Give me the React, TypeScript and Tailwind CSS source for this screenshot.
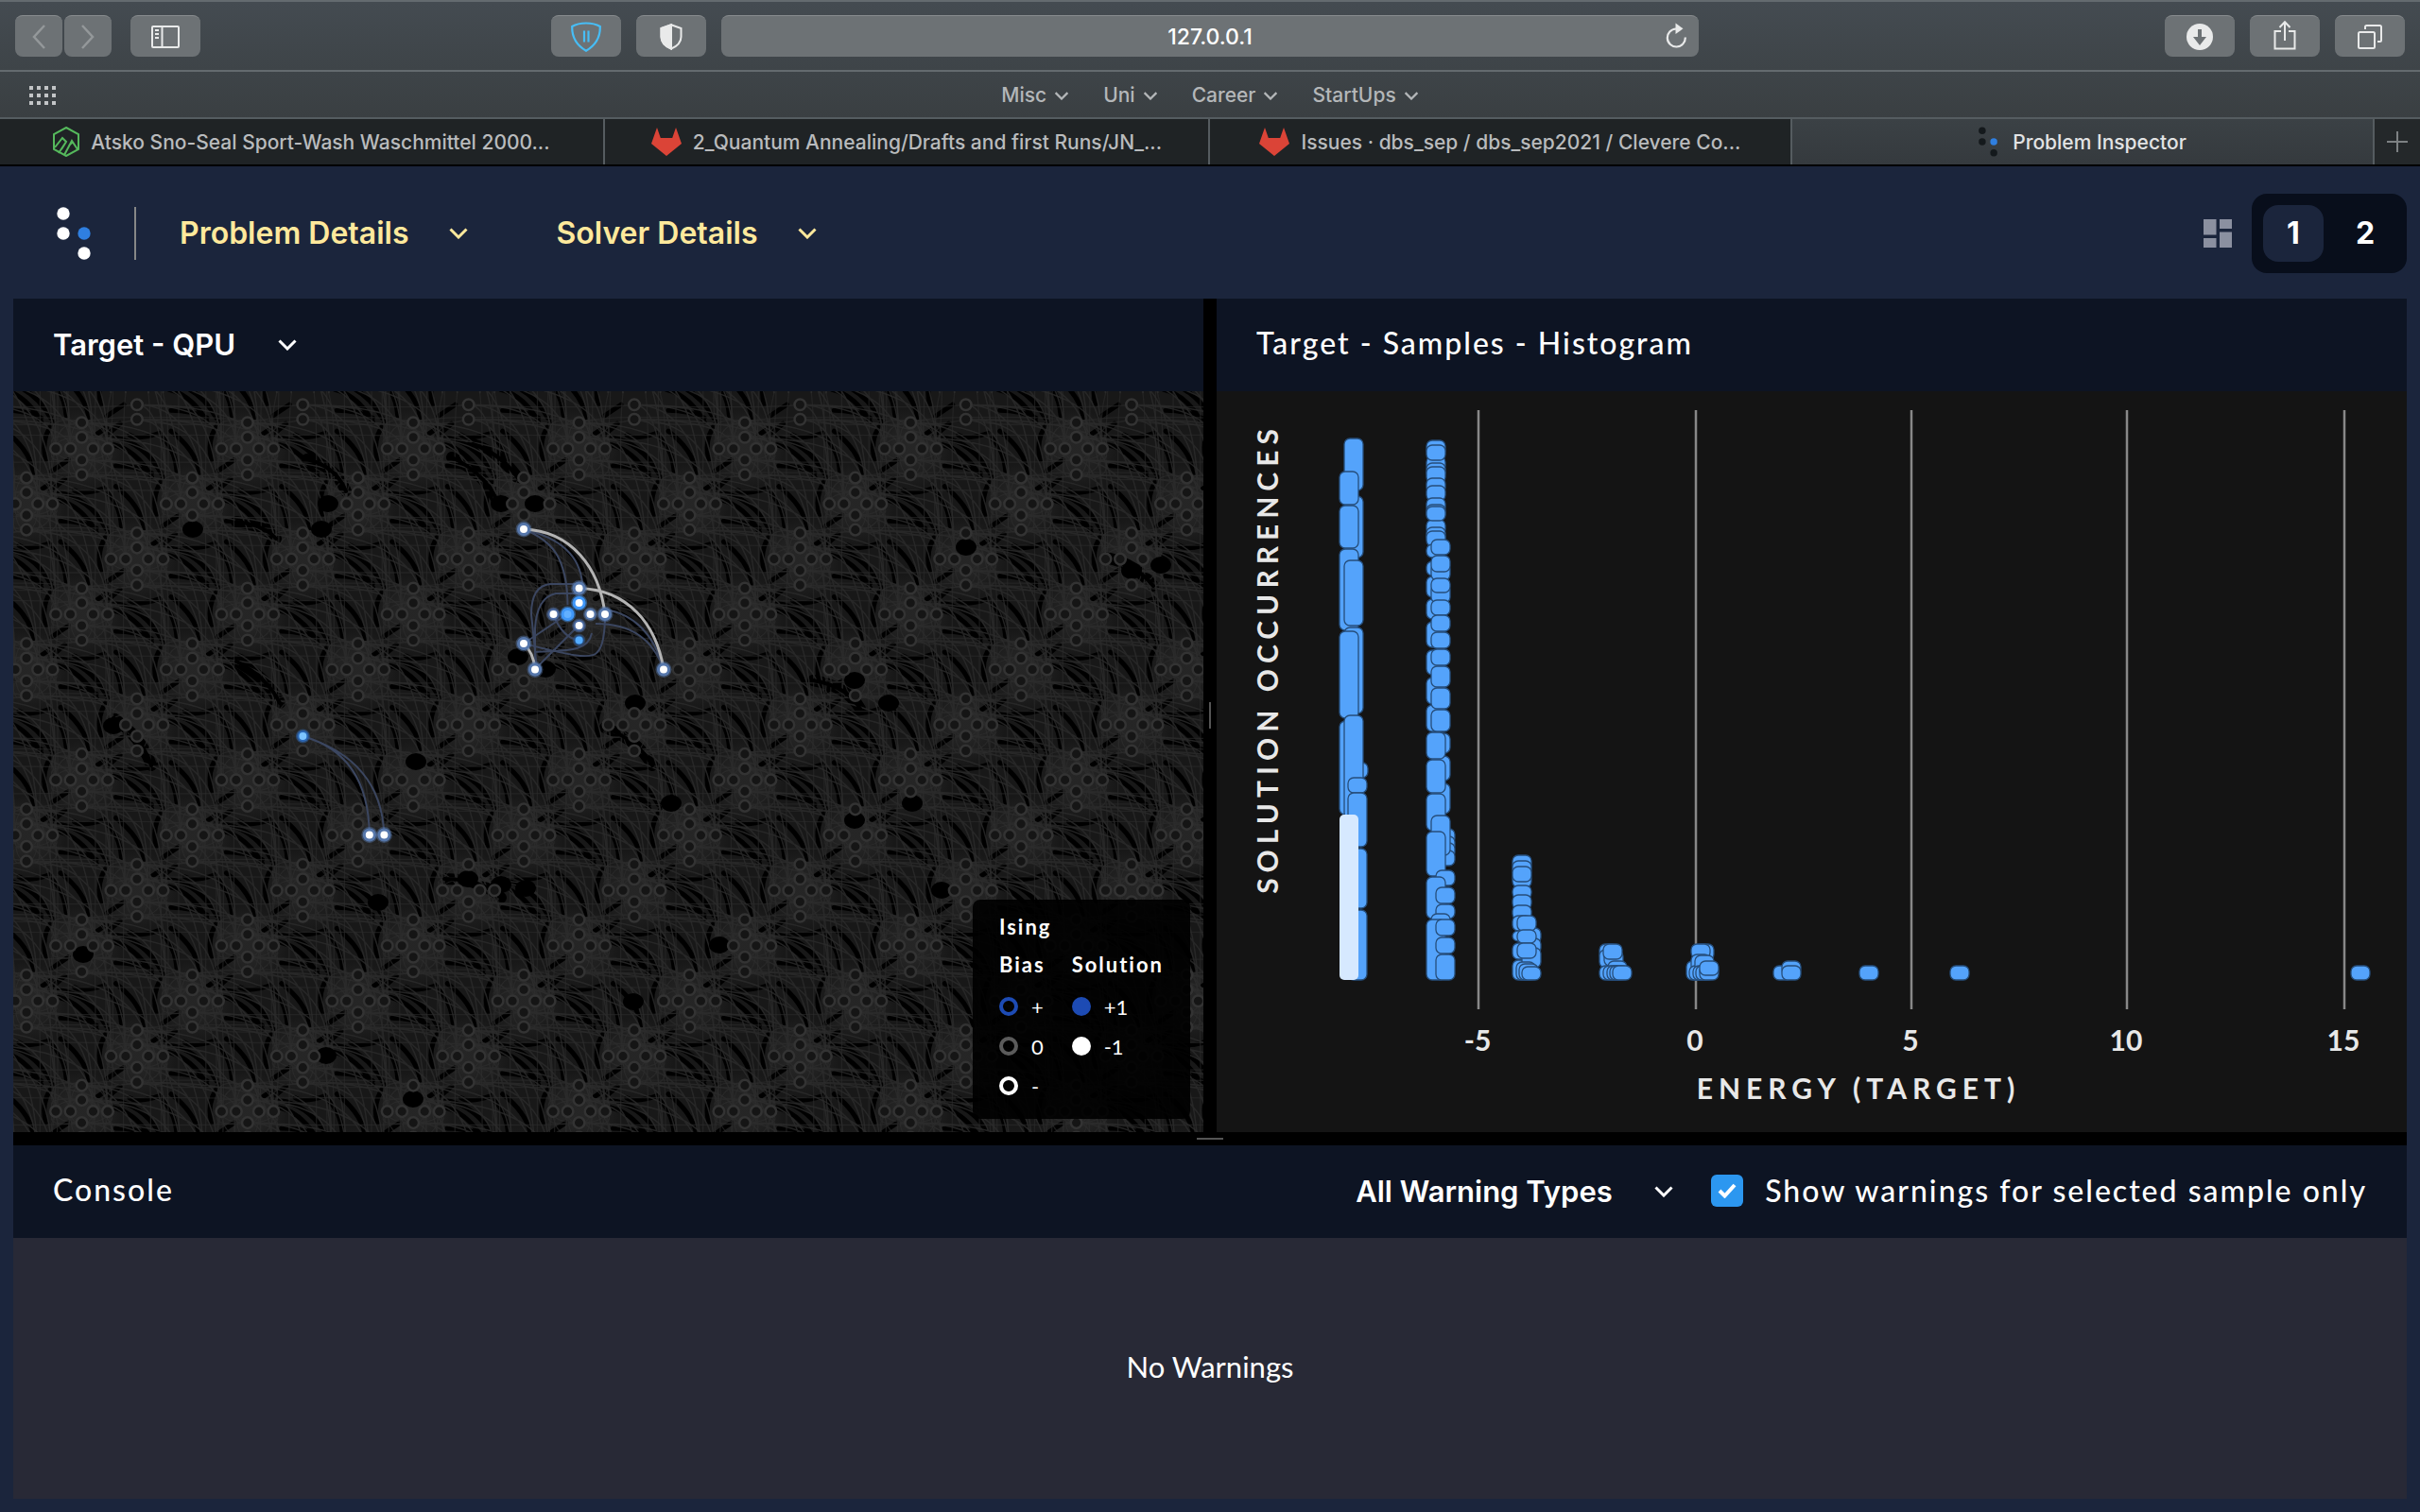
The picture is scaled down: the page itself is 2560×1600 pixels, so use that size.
import React from "react";

const UI = "font-['Inter',sans-serif]";
const BODY = "font-['Lato',sans-serif]";

function Chevron({ className }: { className: string }) {
  return (
    <svg viewBox="0 0 20 12" className={className} fill="none" stroke="currentColor" strokeWidth="3" aria-hidden="true">
      <path d="M1.5 1.5 10 10l8.5-8.5" />
    </svg>
  );
}

/* ---------- Browser chrome ---------- */

function ToolButton({ label, className, children }: { label: string; className: string; children: React.ReactNode }) {
  return (
    <button
      aria-label={label}
      className={`flex h-11 items-center justify-center rounded-lg border-t border-[#888c8e] bg-[#6d7275] text-[#e9eaea] ${className}`}
    >
      {children}
    </button>
  );
}

function Toolbar() {
  return (
    <div className="flex h-19 items-center border-t-2 border-b-2 border-[#646b6f] bg-linear-to-b from-[#444b51] to-[#3e4448] px-4">
      <div className="flex flex-1 items-center justify-between">
        <div className="flex">
          <ToolButton label="Back" className="w-[50px]">
            <svg viewBox="0 0 16 26" className="h-[26px] w-4" fill="none" stroke="#94989a" strokeWidth="2.5">
              <path d="M14 1 3 13l11 12" />
            </svg>
          </ToolButton>
          <ToolButton label="Forward" className="ml-0.5 w-[50px]">
            <svg viewBox="0 0 16 26" className="h-[26px] w-4" fill="none" stroke="#94989a" strokeWidth="2.5">
              <path d="M2 1l11 12L2 25" />
            </svg>
          </ToolButton>
          <ToolButton label="Show sidebar" className="ml-5 w-[74px]">
            <svg viewBox="0 0 30 24" className="h-6 w-[30px]" fill="none" stroke="currentColor" strokeWidth="2">
              <rect x="1" y="1" width="28" height="22" rx="1" />
              <path d="M11.5 1v22" />
              <path d="M4 5h4M4 9h4M4 13h4" strokeWidth="1.8" />
            </svg>
          </ToolButton>
        </div>
        <div className="mr-4 flex gap-4">
          <ToolButton label="Ad blocker" className="w-[74px]">
            <svg viewBox="0 0 32 32" className="h-8 w-8" fill="none" stroke="#47bdf5" strokeWidth="2.2">
              <path d="M16 1.500C11 1.500 5.500 2.500 1.200 5c-.3 10 4 19.500 14.800 25.800C26.800 24.500 31.100 15 30.800 5 26.500 2.500 21 1.500 16 1.500Z" />
              <path d="M14 9.500v12M18.500 9.500v12" />
            </svg>
          </ToolButton>
          <ToolButton label="Privacy report" className="w-[74px]">
            <svg viewBox="0 0 24 28" className="h-7 w-6" fill="none" stroke="currentColor" strokeWidth="2">
              <path d="M12 1.300 22.500 5v9c0 6-4.500 10-10.500 12.700C6 24 1.500 20 1.500 14V5Z" />
              <path d="M12 1.300 1.500 5v9c0 6 4.500 10 10.500 12.700Z" fill="currentColor" />
            </svg>
          </ToolButton>
        </div>
      </div>
      <div className="relative w-[40.9%] flex-none">
        <input
          aria-label="Address"
          defaultValue="127.0.0.1"
          className={`${UI} h-11 w-full rounded-lg border-t border-[#888c8e] bg-[#6d7275] text-center text-[23px] font-medium text-white`}
        />
        <button aria-label="Reload" className="absolute top-2 right-3 text-[#e9eaea]">
          <svg viewBox="0 0 24 28" className="h-7 w-6" fill="none" stroke="currentColor" strokeWidth="2.2">
            <path d="M12 6.500a9.500 9.500 0 1 0 9.800 9" />
            <path d="M11.500 0.500 19.500 6.300l-8 5.700Z" fill="currentColor" stroke="none" />
          </svg>
        </button>
      </div>
      <div className="flex flex-1 justify-end gap-4">
        <ToolButton label="Downloads" className="w-[74px]">
          <svg viewBox="0 0 28 28" className="h-7 w-7">
            <circle cx="14" cy="14" r="14" fill="currentColor" />
            <path d="M12 6h4v8h5l-7 9-7-9h5Z" fill="#6d7275" />
          </svg>
        </ToolButton>
        <ToolButton label="Share" className="w-[74px]">
          <svg viewBox="0 0 24 32" className="-mt-1 h-8 w-6" fill="none" stroke="currentColor" strokeWidth="2">
            <path d="M8 12H1.500v18.500h21V12H16M12 22V2.500M6.500 8 12 2.200 17.500 8" />
          </svg>
        </ToolButton>
        <ToolButton label="Tab overview" className="w-[74px]">
          <svg viewBox="0 0 26 26" className="h-[26px] w-[26px]" fill="none" stroke="currentColor" strokeWidth="2">
            <rect x="1" y="8" width="17" height="17" rx="1.500" />
            <path d="M8 5V2.500Q8 1 9.500 1h14Q25 1 25 2.500v14q0 1.500-1.500 1.500H21" />
          </svg>
        </ToolButton>
      </div>
    </div>
  );
}

function BookmarksBar() {
  return (
    <nav className="relative flex h-[50px] items-center justify-center gap-9 border-b-2 border-[#555c60] bg-linear-to-b from-[#3e4448] to-[#3a3f42] pt-0.5">
      <button aria-label="Show favourites" className="absolute left-[31px]">
        <svg viewBox="0 0 28 20" className="h-5 w-7" fill="#c3c5c7">
          {[0, 8, 16, 24].map((x) => [0, 8, 16].map((y) => <rect key={`${x}-${y}`} x={x} y={y} width="4" height="4" />))}
        </svg>
      </button>
      {["Misc", "Uni", "Career", "StartUps"].map((name) => (
        <button key={name} className={`${UI} flex items-center gap-2 text-[21px] font-medium text-[#b4b7b9]`}>
          {name}
          <Chevron className="h-[9px] w-4" />
        </button>
      ))}
    </nav>
  );
}

function GitLabIcon() {
  return (
    <svg viewBox="0 0 32 30" className="h-[30px] w-8 flex-none" fill="#db4437">
      <path d="M6 0 9.800 11h12.400L26 0l6 17L16 30 0 17Z" />
    </svg>
  );
}

function LeafIcon() {
  return (
    <svg viewBox="0 0 28 32" className="h-8 w-7 flex-none" fill="none" stroke="#55b95c" strokeWidth="2">
      <path d="M14 1 27 8v16l-13 7L1 24V8Z" />
      <path d="M2 22 10 12l4 4-8 12M9 24l5-8M12 30l8-15 6 9M17 20l4-4" />
    </svg>
  );
}

function DotsIcon({ className, tone }: { className: string; tone: string }) {
  return (
    <svg viewBox="0 0 36 56" className={className} aria-hidden="true">
      <circle cx="7" cy="7" r="6.700" fill={tone} />
      <circle cx="7" cy="28" r="6.700" fill={tone} />
      <circle cx="29" cy="28" r="6.700" fill="#2f7fe0" />
      <circle cx="29" cy="49" r="6.700" fill={tone} />
    </svg>
  );
}

function Tab({ title, icon, active, className }: { title: string; icon: React.ReactNode; active?: boolean; className: string }) {
  return (
    <button
      className={`${UI} flex h-full items-center justify-center border-r-2 border-[#555c60] text-[21px] font-medium whitespace-nowrap ${
        active ? "bg-linear-to-b from-[#3b4145] to-[#353a3e] text-[#e2e3e4]" : "bg-[#1f2325] text-[#b9bbbd]"
      } ${className}`}
    >
      {icon}
      <span className="pt-0.5">{title}</span>
    </button>
  );
}

function TabBar() {
  return (
    <div className="flex h-[50px] border-b-2 border-black bg-[#24282a]">
      <Tab className="flex-[640] gap-3" icon={<LeafIcon />} title="Atsko Sno-Seal Sport-Wash Waschmittel 2000..." />
      <Tab className="flex-[640] gap-3" icon={<GitLabIcon />} title="2_Quantum Annealing/Drafts and first Runs/JN_..." />
      <Tab className="flex-[616] gap-3" icon={<GitLabIcon />} title="Issues · dbs_sep / dbs_sep2021 / Clevere Co..." />
      <Tab className="flex-[616] gap-4" active icon={<DotsIcon className="h-8 w-5" tone="#14191c" />} title="Problem Inspector" />
      <button aria-label="New tab" className="flex w-12 items-center justify-center">
        <svg viewBox="0 0 22 22" className="h-[22px] w-[22px]" stroke="#7d8183" strokeWidth="2">
          <path d="M11 0v22M0 11h22" />
        </svg>
      </button>
    </div>
  );
}

/* ---------- App header ---------- */

function Header() {
  return (
    <header className={`${UI} flex h-[140px] items-center pt-0.5 pr-3.5 pl-[60px]`}>
      <DotsIcon className="h-14 w-9" tone="#ffffff" />
      <div className="ml-[46px] h-14 w-0.5 bg-[#868786]" />
      <button className="ml-[46px] flex items-center gap-[43px] text-[32px] font-semibold text-[#ffe99c]">
        Problem Details
        <Chevron className="h-3 w-5" />
      </button>
      <button className="ml-[93px] flex items-center gap-[43px] text-[32px] font-semibold text-[#ffe99c]">
        Solver Details
        <Chevron className="h-3 w-5" />
      </button>
      <button aria-label="Layout" className="ml-auto">
        <svg viewBox="0 0 30 30" className="h-[30px] w-[30px]" fill="#8b90a0">
          <path d="M0 0h13.500v16.500H0zM17 0h13v10H17zM0 20h13.500v10H0zM17 13.500h13V30H17z" />
        </svg>
      </button>
      <div className="ml-[21px] flex h-21 items-center gap-3 rounded-2xl bg-[#080e1b] px-3 text-[32px] font-bold text-white">
        <button className="h-15 w-16 rounded-2xl bg-[#1b253c]">1</button>
        <button className="h-15 w-16 rounded-2xl">2</button>
      </div>
    </header>
  );
}

/* ---------- QPU graph ---------- */

const STEP = 58.45;
const PERIOD = 175.35;
const OFFSETS = [-27.5, -12, 12, 27.5];
const TOP_ROW_Y = 474.7;

const cells: { x: number; y: number; row: number }[] = [];
for (let row = -4; row < 14; row++) {
  const shift = (((86.5 - STEP * row) % PERIOD) + PERIOD) % PERIOD;
  for (let col = -2; col < 9; col++) {
    cells.push({ x: shift + col * PERIOD, y: TOP_ROW_Y + row * STEP, row });
  }
}

function arc(x1: number, y1: number, x2: number, y2: number) {
  const dx = x2 - x1;
  const dy = y2 - y1;
  return `M${x1} ${y1}C${(x1 + dx * 0.62).toFixed(1)} ${y1} ${x2} ${(y2 - dy * 0.62).toFixed(1)} ${x2} ${y2}`;
}

let arcs = "";
let nearArcs = "";
OFFSETS.forEach((v, i) => {
  OFFSETS.forEach((h, j) => {
    if ((i + j) % 2 === 0) {
      arcs += arc(0, v, 2 * STEP + h, STEP);
      arcs += arc(0, v, STEP + h, 2 * STEP);
    }
    nearArcs += `M0 ${v}Q${h * 1.6} ${v * 1.4} ${h} 0`;
    nearArcs += `M0 ${v}Q${h} ${v} ${h} 0`;
  });
});
const rails = OFFSETS.map((o) => {
  const k = o * 1.2;
  return `M0 ${o}Q20 ${k} 60 ${k}H${PERIOD - 60}Q${PERIOD - 20} ${k} ${PERIOD} ${o}M${o} 0Q${k} 20 ${k} 60V${PERIOD - 60}Q${k} ${PERIOD - 20} ${o} ${PERIOD}`;
}).join("");

const shadows = [
  "M34 -12Q66 -6 84 26",
  "M34 -4Q58 2 74 30",
  "M36 18Q58 18 74 26",
  "M26 46Q40 58 42 82",
  "M36 40Q62 60 66 84",
  "M-38 12Q-44 -10 -30 -28",
  "M-32 24L-14 12M14 -14L26 -22M-18 32L-34 46",
  "M-8 44Q0 50 24 42",
].join("");

const holes: [number, number][] = [
  [204, 560], [347, 533], [530, 533], [566, 533], [1022, 579], [1197, 604], [1228, 598], [904, 720], [940, 744], [672, 744],
  [120, 768], [440, 806], [495, 930], [530, 936], [556, 940], [904, 868], [965, 850], [345, 1117], [437, 1163], [761, 1000],
  [996, 942], [400, 955], [548, 695], [577, 708], [670, 1060], [340, 560], [710, 850], [88, 1010],
];

const streaks = [
  "M478 484Q512 500 526 530",
  "M500 470Q530 480 548 506",
  "M325 486Q356 494 366 520",
  "M250 552Q280 556 292 570",
  "M250 700Q282 716 296 744",
  "M640 770Q676 784 690 810",
  "M860 720Q896 726 910 750",
  "M1170 590Q1200 596 1220 620",
  "M470 930Q510 930 530 950",
  "M120 760Q150 780 160 810",
].join("");

const missing = (x: number, y: number) => holes.some(([hx, hy]) => Math.hypot(hx - x, hy - y) < 9);

const nodes = cells.flatMap((c) => {
  if (c.row < -1) return [];
  const all = OFFSETS.flatMap((o) => (c.row === -1 ? (o > 0 ? [[0, o]] : []) : [[0, o], [o, 0]]));
  return all.map(([dx, dy]) => [c.x + dx, c.y + dy]).filter(([x, y]) => x > 0 && x < 1290 && !missing(x, y));
});

const selected: { x: number; y: number; ring: string; core: string; r: number }[] = [
  { x: 554, y: 560, ring: "#5677ab", core: "#ffffff", r: 7 },
  { x: 612.6, y: 622.5, ring: "#5677ab", core: "#ffffff", r: 7 },
  { x: 612.6, y: 638, ring: "#3f97f8", core: "#ffffff", r: 7 },
  { x: 585.5, y: 650, ring: "#4a69a0", core: "#ffffff", r: 6 },
  { x: 600.5, y: 650, ring: "#3f97f8", core: "#62b0ff", r: 7 },
  { x: 624.5, y: 650, ring: "#5677ab", core: "#ffffff", r: 6 },
  { x: 640, y: 650, ring: "#5677ab", core: "#ffffff", r: 7 },
  { x: 612.6, y: 662, ring: "#4a69a0", core: "#ffffff", r: 6 },
  { x: 612.6, y: 677.5, ring: "#275a9c", core: "#55adff", r: 5 },
  { x: 554, y: 681, ring: "#5677ab", core: "#ffffff", r: 7 },
  { x: 566, y: 708.5, ring: "#5677ab", core: "#ffffff", r: 7 },
  { x: 702, y: 708.5, ring: "#5677ab", core: "#ffffff", r: 7 },
  { x: 320.4, y: 779, ring: "#2a66b4", core: "#7cc4ff", r: 6 },
  { x: 390.8, y: 883.5, ring: "#5677ab", core: "#ffffff", r: 7 },
  { x: 406.4, y: 883.5, ring: "#5677ab", core: "#ffffff", r: 7 },
];

function QpuGraph() {
  return (
    <svg viewBox="14 414 1259 784" preserveAspectRatio="xMidYMid slice" className="absolute inset-0 h-full w-full" role="img" aria-label="QPU topology">
      <defs>
        <path id="qpu-shadows" d={shadows} />
        <path id="qpu-arcs" d={arcs} />
        <path id="qpu-near" d={nearArcs} />
        <path id="qpu-rails" d={rails} />
        <radialGradient id="qpu-haze">
          <stop offset="0.3" stopColor="#292929" stopOpacity="0.8" />
          <stop offset="1" stopColor="#292929" stopOpacity="0" />
        </radialGradient>
      </defs>
      <rect x="14" y="414" width="1259" height="784" fill="#181818" />
      <g fill="url(#qpu-haze)">
        {cells.filter((c) => c.row >= 0).map((c, i) => <circle key={i} cx={c.x} cy={c.y} r="42" />)}
      </g>
      <g fill="none" stroke="#000000" strokeWidth="5" strokeLinecap="round">
        {cells.filter((c) => c.row >= -2).map((c, i) => <use key={i} href="#qpu-shadows" x={c.x} y={c.y} />)}
      </g>
      <path d={streaks} fill="none" stroke="#000000" strokeWidth="12" strokeLinecap="round" />
      <g fill="none" stroke="#2c2c2c" strokeOpacity="0.8" strokeWidth="1.500">
        {cells.map((c, i) => <use key={i} href="#qpu-arcs" x={c.x} y={c.y} />)}
      </g>
      <g fill="none" stroke="#2e2e2e" strokeOpacity="0.6" strokeWidth="1.200">
        {cells.filter((c) => c.row >= 0).map((c, i) => <use key={i} href="#qpu-near" x={c.x} y={c.y} />)}
      </g>
      <g fill="none" stroke="#2b2b2b" strokeOpacity="0.6" strokeWidth="1.300">
        {cells.map((c, i) => <use key={i} href="#qpu-rails" x={c.x} y={c.y} />)}
      </g>
      <path d={streaks} fill="none" stroke="#000000" strokeWidth="4" strokeLinecap="round" />
      <g fill="#000000">
        {holes.map(([x, y]) => <ellipse key={`${x}-${y}`} cx={x} cy={y} rx="11" ry="9" />)}
      </g>
      <g fill="#151515" stroke="#333333" strokeWidth="2.500">
        {nodes.map(([x, y], i) => <circle key={i} cx={x} cy={y} r="5.800" />)}
      </g>
      <g fill="none" stroke="#3b4660" strokeWidth="2">
        <path d="M554 560C584 572 600 590 600.500 640M554 560C596 570 614 590 616 618M612 618H582Q562 620 562 650L568 708M612 628H588Q568 632 566 665L566 708" />
        <path d="M612 662L566 708M600 650L554 681M585 650Q596 676 612 677M554 681C590 690 625 700 632 690Q640 682 640 650M566 690C600 688 622 690 626 670" />
        <path d="M640 645C672 650 692 672 702 708M630 660C668 660 690 676 702 708M320 779C360 790 390 820 390.800 883M320 779C376 796 404 830 406.400 883" />
      </g>
      <g fill="none" stroke="#b4b4b4" strokeWidth="3">
        <path d="M554 560C604 562 634 600 640 650M612.600 622.500C664 624 694 660 702 708M554 681Q564 690 566 708" />
      </g>
      {selected.map((n) => (
        <g key={`${n.x}-${n.y}`}>
          <circle cx={n.x} cy={n.y} r={n.r + 1.5} fill={n.ring} opacity="0.45" />
          <circle cx={n.x} cy={n.y} r={n.r} fill={n.ring} />
          <circle cx={n.x} cy={n.y} r="4" fill={n.core} />
        </g>
      ))}
    </svg>
  );
}

function LegendRow({ mark, text }: { mark: string; text: string }) {
  return (
    <li className="flex h-[42px] items-center gap-3.5">
      <span className={`h-5 w-5 rounded-full ${mark}`} />
      {text}
    </li>
  );
}

function Legend() {
  return (
    <aside className={`${BODY} absolute right-3.5 bottom-3.5 rounded-lg bg-black/90 px-7 py-3.5 text-[22px] text-white`}>
      <h3 className="leading-[30px] font-bold tracking-[2px]">Ising</h3>
      <div className="flex gap-7">
        <div>
          <h4 className="mt-2.5 mb-2 leading-[30px] font-bold tracking-[2px]">Bias</h4>
          <ul>
            <LegendRow mark="border-4 border-[#1d4bb4]" text="+" />
            <LegendRow mark="border-4 border-[#5b5b5b]" text="0" />
            <LegendRow mark="border-4 border-white" text="-" />
          </ul>
        </div>
        <div>
          <h4 className="mt-2.5 mb-2 leading-[30px] font-bold tracking-[2px]">Solution</h4>
          <ul>
            <LegendRow mark="bg-[#1d4bb4]" text="+1" />
            <LegendRow mark="bg-white" text="-1" />
          </ul>
        </div>
      </div>
    </aside>
  );
}

/* ---------- Histogram ---------- */

type Bar = [x: number, top: number, bottom: number];

const bars: Bar[] = [
  // energy -8
  [1422, 464, 519], [1422, 525, 590], [1417, 499, 534], [1417, 535, 580], [1417, 581, 667], [1422, 593, 662],
  [1422, 664, 755], [1417, 668, 760], [1427, 807, 823], [1417, 763, 862], [1422, 757, 866], [1426, 823, 839],
  [1426, 839, 896], [1426, 898, 961], [1426, 963, 1037],
  // energy -6
  [1509, 466, 482], [1509, 483, 499], [1509, 490, 506], [1509, 471, 487], [1509, 494, 511], [1509, 506, 522], [1509, 514, 530],
  [1509, 527, 543], [1509, 534, 550], [1509, 550, 566], [1509, 558, 574], [1509, 536, 551], [1509, 562, 578],
  [1509, 576, 590], [1509, 594, 609], [1509, 610, 632], [1509, 634, 655], [1509, 658, 685], [1509, 688, 714],
  [1509, 717, 745], [1509, 746, 774],
  [1514, 596, 614], [1514, 618, 638], [1514, 635, 651], [1514, 571, 587], [1514, 588, 605], [1514, 612, 627],
  [1514, 651, 668], [1514, 669, 686], [1514, 687, 704], [1514, 705, 727], [1514, 728, 750], [1514, 751, 774],
  [1514, 776, 797], [1514, 800, 826], [1514, 829, 861],
  [1509, 775, 803], [1509, 804, 839], [1509, 840, 879],
  [1519, 877, 893], [1519, 885, 901], [1519, 892, 908], [1519, 900, 916], [1514, 863, 905], [1509, 880, 927],
  [1519, 921, 937], [1509, 928, 972], [1519, 939, 956], [1519, 957, 972], [1514, 967, 985],
  [1509, 973, 1037], [1519, 973, 990], [1519, 992, 1009], [1519, 1010, 1037],
  // energy -4
  [1600, 905, 921], [1600, 911, 927], [1600, 923, 939], [1600, 917, 933], [1600, 937, 951], [1600, 947, 962],
  [1600, 958, 973], [1600, 969, 985], [1600, 985, 996], [1600, 998, 1015], [1600, 1016, 1037],
  [1610, 982, 998], [1610, 993, 1009], [1610, 1003, 1024], [1605, 969, 985], [1605, 984, 998], [1605, 998, 1014],
  [1604, 1018, 1037], [1607, 1020, 1037], [1610, 1023, 1037],
  // energy -2
  [1692, 999, 1016], [1692, 1005, 1024], [1692, 1022, 1037], [1697, 1006, 1022], [1696, 999, 1015], [1701, 1017, 1030],
  [1696, 1022, 1037], [1700, 1022, 1037], [1703, 1022, 1037], [1706, 1022, 1037],
  // energy 0
  [1784, 1017, 1037], [1793, 999, 1016], [1789, 999, 1014], [1789, 1010, 1028], [1787, 1022, 1037], [1793, 1011, 1028],
  [1791, 1022, 1037], [1794, 1022, 1037], [1798, 1021, 1037], [1798, 1017, 1032],
  // energy 2 and above
  [1876, 1022, 1037], [1885, 1017, 1032], [1885, 1022, 1037], [1967, 1022, 1037], [2063, 1022, 1037], [2487, 1022, 1037],
];

const ticks = [
  { x: 1564, label: "-5" },
  { x: 1794, label: "0" },
  { x: 2022, label: "5" },
  { x: 2250, label: "10" },
  { x: 2480, label: "15" },
];

function Histogram() {
  return (
    <svg viewBox="1287 414 1259 784" className="absolute inset-0 h-full w-full" role="img" aria-label="Samples histogram">
      <g stroke="#888888" strokeWidth="2.500">
        {ticks.map((t) => <path key={t.label} d={`M${t.x} 434V1068`} />)}
      </g>
      <g fill="#54a3fb" stroke="#264e7b" strokeWidth="1.300">
        {bars.map(([x, top, bottom], i) => <rect key={i} x={x} y={top} width="20" height={bottom - top} rx="6" />)}
      </g>
      <rect x="1417" y="862" width="20" height="175" rx="5" fill="#d6e9ff" />
      <g fill="#e8e8e8" textAnchor="middle" className={`${BODY} text-[30px] font-bold`}>
        {ticks.map((t) => <text key={t.label} x={t.x - 1} y="1112">{t.label}</text>)}
        <text x="1966" y="1163" className="tracking-[6px]">ENERGY (TARGET)</text>
        <text transform="translate(1352 697) rotate(-90)" className="tracking-[6px]">SOLUTION OCCURRENCES</text>
      </g>
    </svg>
  );
}

/* ---------- Panels ---------- */

function Picker({ label, options, className }: { label: string; options: string[]; className: string }) {
  return (
    <div className="relative flex items-center text-white">
      <select
        aria-label={label}
        className={`${UI} appearance-none bg-transparent text-[31px] leading-10 font-semibold text-white ${className}`}
      >
        {options.map((o) => <option key={o}>{o}</option>)}
      </select>
      <Chevron className="pointer-events-none absolute right-0 h-3 w-5" />
    </div>
  );
}

function Console() {
  return (
    <section className="flex flex-[374] flex-col">
      <div className={`${BODY} flex h-[98px] flex-none items-center bg-[#0d1423] px-[42px] text-[32px] text-white`}>
        <h2 className="mr-auto pb-1 font-medium tracking-[2px]">Console</h2>
        <Picker label="Warning types" options={["All Warning Types"]} className="pr-16" />
        <label className="ml-10 flex items-center gap-[23px] pb-0.5 font-medium tracking-[2px]">
          <span className="relative flex">
            <input type="checkbox" defaultChecked className="h-[34px] w-[34px] appearance-none rounded-md bg-[#2c97f0]" />
            <svg viewBox="0 0 20 16" className="pointer-events-none absolute top-[9px] left-[7px] h-4 w-5" fill="none" stroke="#ffffff" strokeWidth="4">
              <path d="M2 8l5.500 5.500L18 2" />
            </svg>
          </span>
          <span>Show warnings for selected sample only</span>
        </label>
      </div>
      <div className={`${BODY} flex flex-1 items-center justify-center bg-[#282936] pb-1 text-[31px] text-white`}>No Warnings</div>
    </section>
  );
}

export default function App() {
  return (
    <div className="flex h-screen flex-col overflow-hidden bg-[#1b253c]">
      <Toolbar />
      <BookmarksBar />
      <TabBar />
      <Header />
      <main className="flex min-h-0 flex-1 flex-col px-3.5 pb-3.5">
        <div className="flex min-h-0 flex-[882]">
          <section className="flex flex-1 flex-col">
            <div className="flex h-[98px] items-center bg-[#0d1423] px-[42px]">
              <Picker label="View" options={["Target - QPU"]} className="pr-16" />
            </div>
            <div className="relative flex-1 overflow-hidden bg-[#191919]">
              <QpuGraph />
              <Legend />
            </div>
          </section>
          <div className="flex w-3.5 items-center justify-center bg-black">
            <div className="h-7 w-0.5 bg-[#555555]" />
          </div>
          <section className="flex flex-1 flex-col">
            <div className="flex h-[98px] items-center bg-[#0d1423] px-[42px]">
              <h2 className={`${BODY} pb-1 text-[32px] font-medium tracking-[2px] text-white`}>Target - Samples - Histogram</h2>
            </div>
            <div className="relative flex-1 bg-[#141414]">
              <Histogram />
            </div>
          </section>
        </div>
        <div className="flex h-3.5 flex-none items-center justify-center bg-black">
          <div className="h-0.5 w-7 bg-[#555555]" />
        </div>
        <Console />
      </main>
    </div>
  );
}
